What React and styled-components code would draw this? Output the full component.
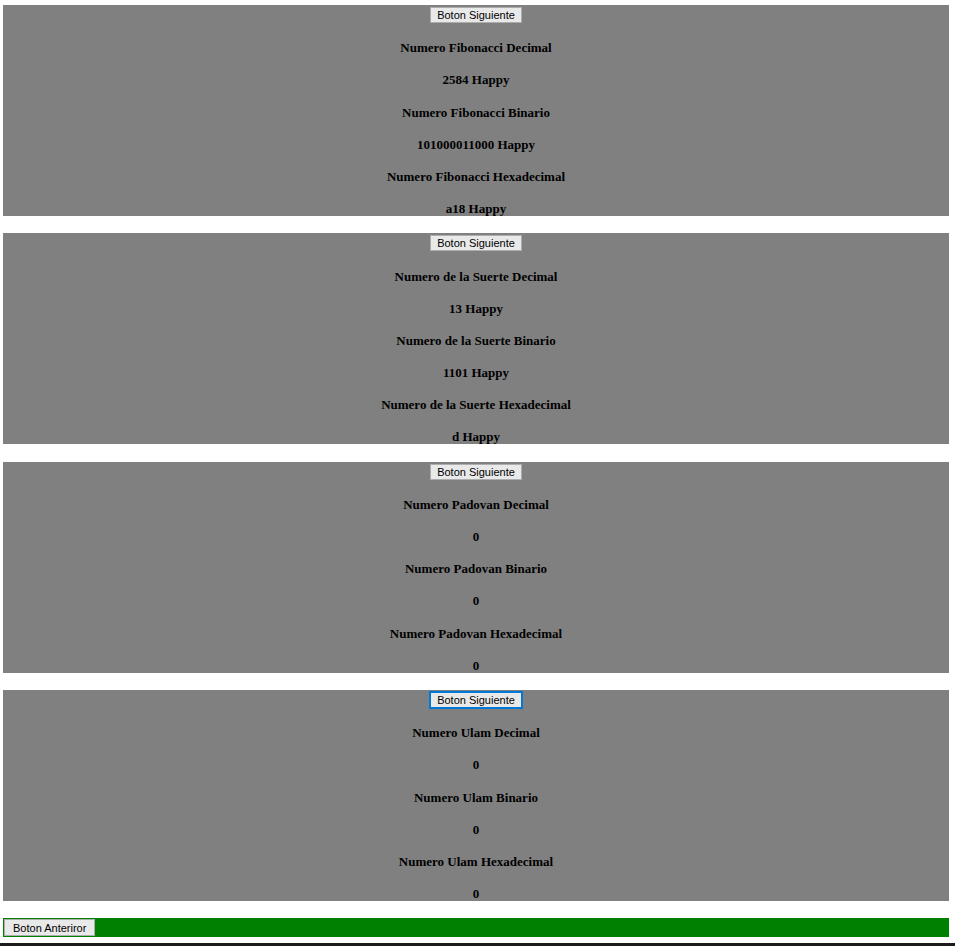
import React from 'react';
import styled, { createGlobalStyle } from 'styled-components';

const GlobalStyle = createGlobalStyle`
  html, body {
    margin: 0;
    padding: 0;
    background: #ffffff;
  }
`;

const Page = styled.div`
  padding: 5px 6px 0 3px;
  font-family: "Liberation Serif", "Times New Roman", serif;
`;

const Panel = styled.section`
  display: flow-root;
  background: #808080;
  text-align: center;
  margin-bottom: 17.2px;

  & > h4:last-child {
    margin-bottom: 0;
  }
`;

const ButtonRow = styled.div`
  height: 18px;
  padding-top: 2px;
  box-sizing: border-box;
  display: flex;
  justify-content: center;
`;

const NativeButton = styled.button`
  height: 16px;
  padding: 0 6px;
  box-sizing: border-box;
  font-family: Tahoma, "Liberation Sans", Arial, sans-serif;
  font-size: 11px;
  line-height: 14px;
  color: #000000;
  background: #e9e9e9;
  border: 1px solid ${(p) => (p.$focused ? '#0078d7' : '#adadad')};
  box-shadow: ${(p) => (p.$focused ? '0 0 0 1px #0078d7' : 'none')};
  border-radius: 0;
  cursor: default;
`;

const Label = styled.h4`
  margin: 17.2px 0;
  font-size: 13px;
  line-height: 15px;
  font-weight: bold;
  color: #000000;
`;

const Footer = styled.footer`
  height: 19px;
  background: #008000;
  padding: 1px;
  box-sizing: border-box;
  display: flex;
  align-items: flex-start;
`;

const BackButton = styled(NativeButton)`
  height: 17px;
  padding: 0 8px;
`;

const ScrollStrip = styled.div`
  height: 4px;
  margin-top: 6px;
  margin-left: -3px;
  margin-right: -6px;
  background: #1c1c1c;
`;

const sections = [
  {
    name: 'Fibonacci',
    values: ['2584 Happy', '101000011000 Happy', 'a18 Happy'],
  },
  {
    name: 'de la Suerte',
    values: ['13 Happy', '1101 Happy', 'd Happy'],
  },
  {
    name: 'Padovan',
    values: ['0', '0', '0'],
  },
  {
    name: 'Ulam',
    values: ['0', '0', '0'],
    focused: true,
  },
];

const bases = ['Decimal', 'Binario', 'Hexadecimal'];

const NumberPanel = ({ name, values, focused }) => (
  <Panel>
    <ButtonRow>
      <NativeButton $focused={focused}>Boton Siguiente</NativeButton>
    </ButtonRow>
    {bases.map((base, i) => (
      <React.Fragment key={base}>
        <Label>Numero {name} {base}</Label>
        <Label>{values[i]}</Label>
      </React.Fragment>
    ))}
  </Panel>
);

const App = () => (
  <>
    <GlobalStyle />
    <Page>
      {sections.map((s) => (
        <NumberPanel key={s.name} {...s} />
      ))}
      <Footer>
        <BackButton>Boton Anteriror</BackButton>
      </Footer>
      <ScrollStrip />
    </Page>
  </>
);

export default App;
